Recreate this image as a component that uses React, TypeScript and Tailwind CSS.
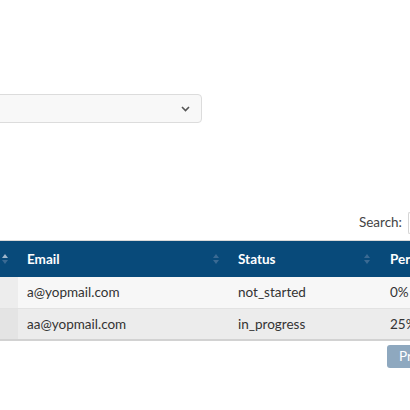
import React from 'react'

const rows = [
  { email: 'a@yopmail.com', status: 'not_started', pct: '0%' },
  { email: 'aa@yopmail.com', status: 'in_progress', pct: '25%' },
]

function SortIcon({ active }: { active?: 'up' | 'down' }) {
  return (
    <span className="flex flex-col items-center gap-[2px]">
      <span className={`block w-0 h-0 border-l-[3px] border-r-[3px] border-b-[4px] border-l-transparent border-r-transparent ${active === 'up' ? 'border-b-[#9fb6cb]' : 'border-b-[#3a6a93]'}`} />
      <span className={`block w-0 h-0 border-l-[3px] border-r-[3px] border-t-[4px] border-l-transparent border-r-transparent ${active === 'down' ? 'border-t-[#9fb6cb]' : 'border-t-[#3a6a93]'}`} />
    </span>
  )
}

export default function App() {
  return (
    <div className="w-[410px] h-[410px] overflow-hidden bg-white text-[#212529]" style={{ fontFamily: 'Lato, "Noto Sans", sans-serif' }}>
      <div className="pt-[94px] ml-[-98px]">
        <div className="w-[300px] h-[29px] rounded-[4px] border border-[#dcdcdc] bg-[#f8f8f8] flex items-center justify-end pr-[11px]">
          <svg width="9" height="6" viewBox="0 0 9 6">
            <path d="M1 1l3.5 3.5L8 1" fill="none" stroke="#555" strokeWidth="1.6" />
          </svg>
        </div>
      </div>

      <div className="mt-[85px] w-[700px] flex">
        <div className="w-[410px] flex justify-end items-center h-[29px]">
          <span className="text-[13.5px] text-[#444] mr-[6px]">Search:</span>
          <span className="block w-[2px] h-[22px] border-l border-t border-b border-[#d5d5d5] rounded-l-[3px]" />
        </div>
      </div>

      <div className="mt-[3px] ml-[-60px] w-[700px] border-t border-[#d9d9d9]">
        <div className="flex h-[36px] bg-[#084a7a] text-white text-[13.5px] font-bold items-center">
          <div className="w-[78px] h-full flex items-center justify-end pr-[10px]">
            <SortIcon active="up" />
          </div>
          <div className="w-[210px] h-full flex items-center justify-between pl-[9px] pr-[9px]">
            <span>Email</span>
            <SortIcon />
          </div>
          <div className="w-[152px] h-full flex items-center justify-between pl-[10px] pr-[10px]">
            <span>Status</span>
            <SortIcon />
          </div>
          <div className="w-[200px] h-full flex items-center pl-[10px]">
            <span>Percentage</span>
          </div>
        </div>
        {rows.map((r, i) => (
          <div
            key={r.email}
            className={`flex h-[32px] items-center text-[13.5px] text-[#333] border-b ${i === 0 ? 'bg-[#f7f7f7] border-[#e2e2e2]' : 'bg-[#ececec] border-[#d2d2d2] border-b-2'}`}
          >
            <div className={`w-[78px] h-full ${i === 0 ? 'bg-[#ededed]' : 'bg-[#e4e4e4]'}`} />
            <div className="w-[210px] pl-[9px]">{r.email}</div>
            <div className="w-[152px] pl-[10px]">{r.status}</div>
            <div className="w-[200px] pl-[10px]">{r.pct}</div>
          </div>
        ))}
      </div>

      <div className="mt-[4px] flex">
        <div className="ml-[387px] h-[23px] w-[60px] rounded-[3px] bg-[#8ea8bf] text-white text-[13.5px] flex items-center pl-[12px] shrink-0">
          Previous
        </div>
      </div>
    </div>
  )
}
